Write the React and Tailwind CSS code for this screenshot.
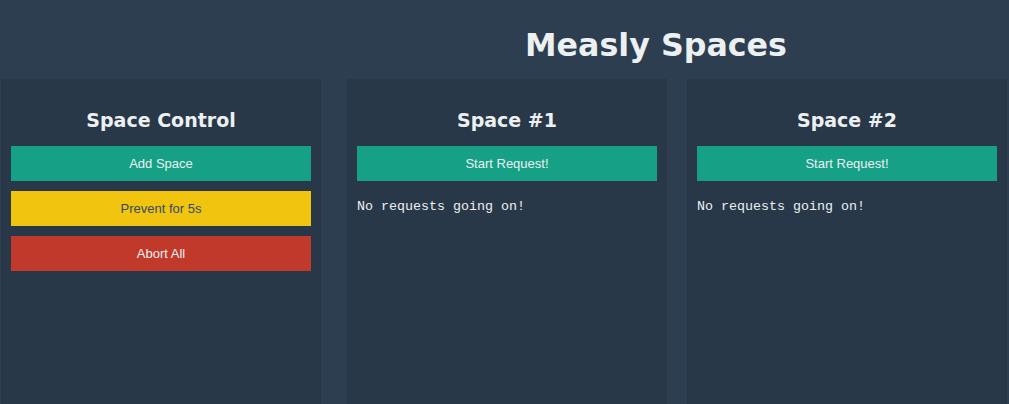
export default function App() {
  const btn = "w-full h-[35px] flex items-center justify-center text-[13px] [font-family:'Liberation_Sans',Arial,sans-serif]";
  const heading = "text-center text-[19px] font-bold text-[#ecf0f1] [font-family:'DejaVu_Sans',Verdana,sans-serif] pt-[27px] h-[67px]";
  return (
    <div className="w-[1009px] h-[404px] bg-[#2c3e50] overflow-hidden">
      <div className="h-[79px] flex items-center pl-[303px] pt-[14px] justify-center">
        <h1 className="text-[31.7px] font-bold text-[#ecf0f1] [font-family:'DejaVu_Sans',Verdana,sans-serif] leading-none pb-[2px]">
          Measly Spaces
        </h1>
      </div>
      <div className="flex h-[325px]">
        <div className="ml-px w-[320px] bg-[#283849] px-[10px]">
          <div className={heading}>Space Control</div>
          <div className="flex flex-col gap-[10px]">
            <div className={btn + " bg-[#16a085] text-[#ecf0f1]"}>Add Space</div>
            <div className={btn + " bg-[#f1c40f] text-[#34495e]"}>Prevent for 5s</div>
            <div className={btn + " bg-[#c0392b] text-[#ecf0f1]"}>Abort All</div>
          </div>
        </div>
        <div className="ml-[26px] w-[320px] bg-[#283849] px-[10px]">
          <div className={heading}>Space #1</div>
          <div className={btn + " bg-[#16a085] text-[#ecf0f1]"}>Start Request!</div>
          <p className="mt-[16px] text-[13.33px] text-[#ecf0f1] [font-family:'Liberation_Mono','Courier_New',monospace]">No requests going on!</p>
        </div>
        <div className="ml-[20px] w-[320px] bg-[#283849] px-[10px]">
          <div className={heading}>Space #2</div>
          <div className={btn + " bg-[#16a085] text-[#ecf0f1]"}>Start Request!</div>
          <p className="mt-[16px] text-[13.33px] text-[#ecf0f1] [font-family:'Liberation_Mono','Courier_New',monospace]">No requests going on!</p>
        </div>
      </div>
    </div>
  );
}
